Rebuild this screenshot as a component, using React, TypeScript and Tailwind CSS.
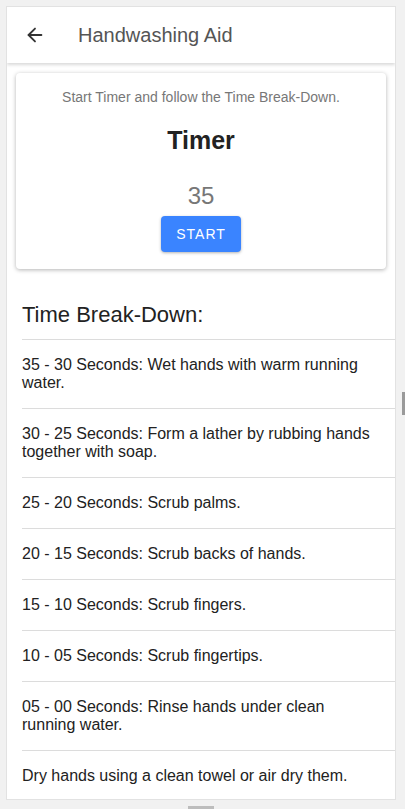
import { ArrowLeft } from "lucide-react";

const STEPS = [
  "35 - 30 Seconds: Wet hands with warm running water.",
  "30 - 25 Seconds: Form a lather by rubbing hands together with soap.",
  "25 - 20 Seconds: Scrub palms.",
  "20 - 15 Seconds: Scrub backs of hands.",
  "15 - 10 Seconds: Scrub fingers.",
  "10 - 05 Seconds: Scrub fingertips.",
  "05 - 00 Seconds: Rinse hands under clean running water.",
  "Dry hands using a clean towel or air dry them.",
];

export default function App() {
  return (
    <div
      className="relative h-[809px] w-[405px] overflow-hidden bg-[#f1f1f1] pt-[6px] pl-[6px] pr-[9px] pb-[9px]"
      style={{ fontFamily: '"Liberation Sans", Arial, sans-serif' }}
    >
      <div className="flex h-full flex-col overflow-hidden border border-[#e2e2e2] bg-white">
        <header className="relative z-10 flex h-[56px] shrink-0 items-center bg-white shadow-[0_2px_3px_rgba(0,0,0,0.15)]">
          <ArrowLeft className="ml-[17px] h-[22px] w-[22px] text-[#333]" strokeWidth={2} />
          <h1 className="ml-[32px] text-[20px] text-[#555]">Handwashing Aid</h1>
        </header>

        <main className="flex-1">
          <section className="mx-[9px] mt-[10px] flex h-[196px] flex-col items-center rounded-[4px] bg-white shadow-[0_1px_4px_rgba(0,0,0,0.3)]">
            <p className="mt-[14px] text-[14px] leading-[20px] text-[#777]">
              Start Timer and follow the Time Break-Down.
            </p>
            <h2 className="mt-[19px] text-[25px] leading-[28px] font-bold text-[#222]">Timer</h2>
            <div className="mt-[28px] text-[24px] leading-[28px] text-[#777]">35</div>
            <button className="mt-[6px] h-[36px] w-[80px] rounded-[4px] bg-[#3a84ff] text-[14px] font-medium tracking-[1px] text-white shadow-[0_1px_3px_rgba(0,0,0,0.3)]">
              START
            </button>
          </section>

          <h3 className="mt-[34px] pl-[15px] text-[22px] leading-[24px] text-[#222]">
            Time Break-Down:
          </h3>
          <ul className="mt-[12px] ml-[15px]">
            {STEPS.map((step) => (
              <li
                key={step}
                className="border-t border-[#dcdcdc] py-4 pr-[20px] text-[16px] leading-[18px] text-[#222]"
              >
                {step}
              </li>
            ))}
          </ul>
        </main>
      </div>

      {/* scrollbar stubs */}
      <div className="absolute top-[392px] right-0 h-[23px] w-[3px] bg-[#9a9a9a]" />
      <div className="absolute bottom-0 left-[188px] h-[3px] w-[26px] bg-[#bdbdbd]" />
    </div>
  );
}
